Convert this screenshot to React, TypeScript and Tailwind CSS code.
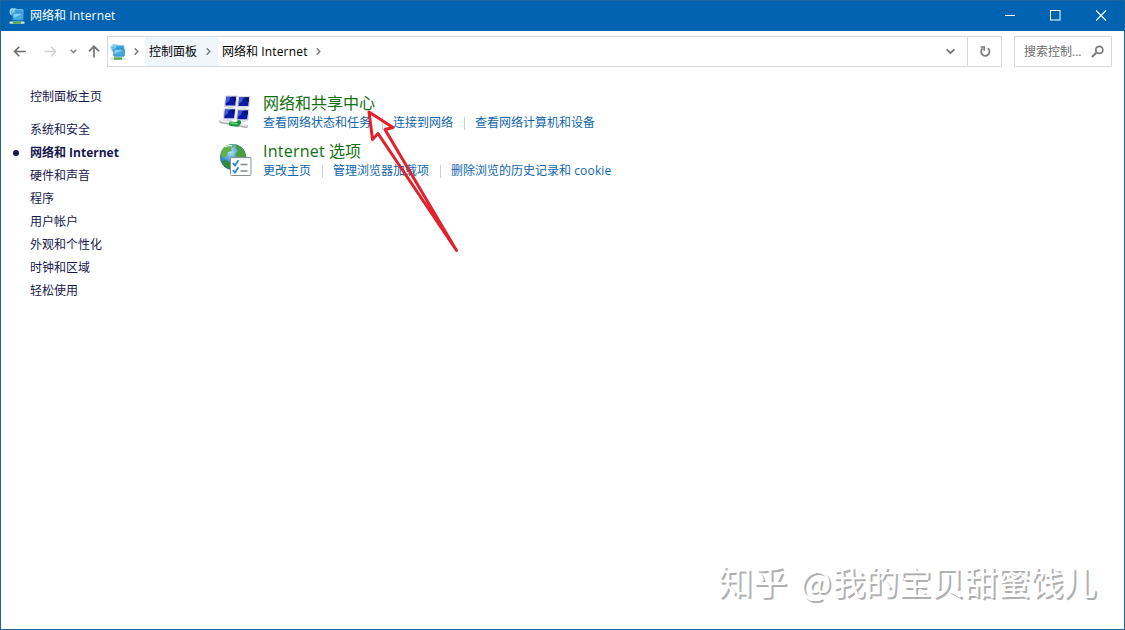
import { ChevronDown, ChevronRight } from 'lucide-react';
import type { ReactNode } from 'react';

interface Category {
  title: string;
  icon: ReactNode;
  tasks: string[];
}

const sidebarLinks = [
  '系统和安全',
  '网络和 Internet',
  '硬件和声音',
  '程序',
  '用户帐户',
  '外观和个性化',
  '时钟和区域',
  '轻松使用',
];

// Latin words get slightly wider tracking than the Chinese around them
function MixedText({ text }: { text: string }) {
  return (
    <>
      {text.split(/([A-Za-z]+)/).map((part, i) =>
        /^[A-Za-z]/.test(part) ? (
          <span key={i} className="tracking-[0.015em]">
            {part}
          </span>
        ) : (
          part
        )
      )}
    </>
  );
}

function NetworkIcon({ className }: { className?: string }) {
  return (
    <svg viewBox="0 0 16 18" width="16" height="18" className={className}>
      <circle cx="4.3" cy="4.8" r="3.8" fill="#a9d8ef" />
      <path d="M1 4.5C3 5.5 6 4 7 1.5M3 8.5C2 6 3 2.5 5 1" stroke="#5aa9d6" strokeWidth="0.9" fill="none" />
      <rect x="5.5" y="2.5" width="8.5" height="6.5" rx="0.6" fill="#3ba3dc" stroke="#7fcbee" strokeWidth="0.8" />
      <rect x="3.8" y="6" width="10.5" height="7.2" rx="0.6" fill="#45a9e2" stroke="#2582bd" strokeWidth="0.8" />
      <path d="M4.5 6.8h9L4.5 11z" fill="#83cdf0" />
      <rect x="0.5" y="14.5" width="15" height="2.3" rx="0.6" fill="#d3e2e2" />
      <rect x="4" y="14.2" width="8" height="2.6" rx="0.6" fill="#55ad4f" />
    </svg>
  );
}

function Monitor({ x, y }: { x: number; y: number }) {
  return (
    <g transform={`translate(${x} ${y})`}>
      <path d="M1.4 0.4H13L12 11H0.4z" fill="#e6e9ee" stroke="#b9bec8" strokeWidth="0.5" />
      <path d="M2.2 1.2H12.1L11.2 10H1.4z" fill="#0b1aa0" />
      <path d="M2.2 1.2H6.4L5 5.4L1.6 8z" fill="#4557c8" />
      <path d="M7.5 1.2H12.1L11.5 6.2L9.2 4.4z" fill="#071078" />
      <path d="M4 11.4H9.5L9 12.8H3.4z" fill="#d5d9df" />
    </g>
  );
}

function SharingCenterIcon() {
  return (
    <svg viewBox="0 0 34 34" width="34" height="34">
      <Monitor x={5} y={0.5} />
      <Monitor x={18} y={1} />
      <Monitor x={3.8} y={13.2} />
      <Monitor x={17} y={14.2} />
      <path d="M2 26.5L27 31.3" stroke="#a9aeb2" strokeWidth="3.6" strokeLinecap="round" />
      <path d="M2 25.8L27 30.6" stroke="#eceff0" strokeWidth="2" strokeLinecap="round" />
      <path d="M12 28.8L18 29.6L20 27.4" stroke="#13933a" strokeWidth="4.4" strokeLinecap="round" strokeLinejoin="round" fill="none" />
      <path d="M12 28L18 28.8" stroke="#54d472" strokeWidth="1.8" strokeLinecap="round" />
    </svg>
  );
}

function InternetOptionsIcon() {
  return (
    <svg viewBox="0 0 34 34" width="34" height="34">
      <defs>
        <radialGradient id="globe" cx="0.4" cy="0.3" r="0.75">
          <stop offset="0" stopColor="#b9e5fb" />
          <stop offset="0.5" stopColor="#3c8dcb" />
          <stop offset="1" stopColor="#133f8d" />
        </radialGradient>
      </defs>
      <circle cx="14" cy="14" r="13" fill="url(#globe)" />
      <path d="M3 7C6 2.5 10 1 13 1L15 3L12 5L13 8L9 9L8 13L4 15L1.5 12z" fill="#61b04b" />
      <path d="M17 1.5C22 3 25.5 6.5 26.5 11L26 15H18L16 11L19 8L17 5z" fill="#469e3d" />
      <path d="M2.5 18L7 17L11 20V26C7 25 4 22 2.5 18z" fill="#2f8a3e" />
      <path d="M6 4C8.5 2.5 11 2 13 3" stroke="#d9f4de" strokeWidth="1.4" fill="none" />
      <rect x="11.5" y="14.5" width="20.5" height="18" rx="1" fill="#fdfdfd" stroke="#8b9299" />
      <path d="M12.5 14.5H31.5" stroke="#8b9299" strokeWidth="1.4" strokeDasharray="1 1" />
      <path d="M14 20L16 22.5L19.5 17.3M14 27L16 29.5L19.5 24.3" stroke="#2284bf" strokeWidth="1.7" fill="none" />
      <path d="M21.5 21.5H28.5M21.5 28H28.5" stroke="#858b91" strokeWidth="1.3" />
    </svg>
  );
}

const categories: Category[] = [
  {
    title: '网络和共享中心',
    icon: <SharingCenterIcon />,
    tasks: ['查看网络状态和任务', '连接到网络', '查看网络计算机和设备'],
  },
  {
    title: 'Internet 选项',
    icon: <InternetOptionsIcon />,
    tasks: ['更改主页', '管理浏览器加载项', '删除浏览的历史记录和 cookie'],
  },
];

function TitleBar() {
  return (
    <header className="flex h-[31px] shrink-0 items-center bg-[#0063b1] pl-[9px] text-white">
      <NetworkIcon className="mr-[5px]" />
      <h1 className="flex-1">
        <MixedText text="网络和 Internet" />
      </h1>
      <button className="flex h-full w-[45px] items-center justify-center" aria-label="最小化">
        <svg width="11" height="11" viewBox="0 0 11 11">
          <path d="M0 5.5H10" stroke="white" />
        </svg>
      </button>
      <button className="flex h-full w-[45px] items-center justify-center" aria-label="最大化">
        <svg width="11" height="11" viewBox="0 0 11 11">
          <rect x="0.5" y="0.5" width="9.5" height="9.5" fill="none" stroke="white" />
        </svg>
      </button>
      <button className="flex h-full w-[47px] items-center justify-center" aria-label="关闭">
        <svg width="11" height="11" viewBox="0 0 11 11">
          <path d="M0 0.5L10 10.5M10 0.5L0 10.5" stroke="white" strokeWidth="1.1" />
        </svg>
      </button>
    </header>
  );
}

function AddressRow() {
  return (
    <nav className="flex h-[41px] shrink-0 items-center pr-[13px] pl-[13px]">
      <svg width="13" height="13" viewBox="0 0 13 13" fill="none" stroke="#6b6b6b" strokeWidth="1.6">
        <path d="M12.8 6.5H1.8M6.3 1.8L1.6 6.5L6.3 11.2" />
      </svg>
      <svg className="ml-[18px]" width="13" height="13" viewBox="0 0 13 13" fill="none" stroke="#cfcfcf" strokeWidth="1.4">
        <path d="M0.5 6.5H11.5M7 1.8L11.7 6.5L7 11.2" />
      </svg>
      <svg className="ml-[13px]" width="7" height="5" viewBox="0 0 7 5" fill="none" stroke="#858585" strokeWidth="1.5">
        <path d="M0.7 0.8L3.5 3.6L6.3 0.8" />
      </svg>
      <svg className="ml-[11px]" width="12" height="13" viewBox="0 0 12 13" fill="none" stroke="#757575" strokeWidth="1.7">
        <path d="M6 12.5V1.5M1 6.3L6 1.3L11 6.3" />
      </svg>

      <div className="ml-[7px] flex h-[31px] flex-1 items-center border border-[#d9d9d9]">
        <NetworkIcon className="ml-[2px]" />
        <ChevronRight className="ml-[5px] text-[#777]" size={11} strokeWidth={3.2} />
        <div className="ml-[3px] flex h-full items-center bg-[#eff7fd] pl-1">
          <span>控制面板</span>
          <ChevronRight className="mr-1 ml-[6px] text-[#777]" size={11} strokeWidth={3.2} />
        </div>
        <span className="ml-[4px]">
          <MixedText text="网络和 Internet" />
        </span>
        <ChevronRight className="ml-[5px] text-[#777]" size={11} strokeWidth={3.2} />
        <ChevronDown className="mr-2.5 ml-auto text-[#777]" size={13} strokeWidth={3.6} />
        <div className="flex h-full w-[34px] items-center justify-center border-l border-[#d9d9d9]">
          <svg width="12" height="13" viewBox="0 0 12 13" fill="none" stroke="#7a7a7a" strokeWidth="1.7">
            <path d="M8.8 3.2A4.2 4.2 0 1 1 3.6 3.4" />
            <path d="M1.6 2H5.2V5.8" />
          </svg>
        </div>
      </div>

      <div className="ml-3 flex h-[31px] w-[98px] items-center border border-[#d9d9d9] pl-[9px]">
        <span className="flex-1 whitespace-nowrap text-[#6d6d6d]">搜索控制...</span>
        <svg className="mr-[7px]" width="13" height="13" viewBox="0 0 13 13" fill="none" stroke="#777" strokeWidth="1.7">
          <circle cx="8.3" cy="4.9" r="3.5" />
          <path d="M5.6 7.4L1 12" strokeWidth="2" />
        </svg>
      </div>
    </nav>
  );
}

function Sidebar() {
  return (
    <aside className="w-[218px] shrink-0 pt-[13px] pl-[11px] text-[#17174f]">
      <a className="block h-[23px] pl-[18px] leading-[23px]">控制面板主页</a>
      <ul className="mt-2.5">
        {sidebarLinks.map((link) => {
          const active = link === '网络和 Internet';
          return (
            <li key={link} className="flex h-[23px] items-center">
              <span className={active ? 'ml-px size-[6px] rounded-full bg-[#17174f]' : 'ml-px size-[6px]'} />
              <a className={active ? 'ml-[11px] font-bold' : 'ml-[11px]'}>{link}</a>
            </li>
          );
        })}
      </ul>
    </aside>
  );
}

function CategoryItem({ category }: { category: Category }) {
  return (
    <section className="flex h-12">
      <div className="mt-px w-11">{category.icon}</div>
      <div>
        <h2 className="h-[18px] text-[16px] leading-[18px] text-[#0f700f]">
          <MixedText text={category.title} />
        </h2>
        <div className="mt-[2px] flex h-[18px] items-center text-[#0f66b0]">
          {category.tasks.map((task, i) => (
            <div key={task} className="flex items-center">
              {i > 0 && <span className="mr-2.5 ml-[11px] h-[13px] w-px bg-[#cfcfcf]" />}
              <a className="whitespace-nowrap">
                <MixedText text={task} />
              </a>
            </div>
          ))}
        </div>
      </div>
    </section>
  );
}

export default function App() {
  return (
    <div className="relative flex h-[630px] w-[1125px] flex-col overflow-hidden bg-white font-['Open_Sans','Noto_Sans_CJK_SC',sans-serif] text-[12px] leading-[18px] text-black">
      <TitleBar />
      <AddressRow />
      <div className="flex flex-1 pl-px">
        <Sidebar />
        <main className="pt-[22px]">
          {categories.map((category) => (
            <CategoryItem key={category.title} category={category} />
          ))}
        </main>
      </div>

      <div className="pointer-events-none absolute inset-0 border border-[#21649a]" />

      {/* hand-drawn pointer to the sharing center link */}
      <svg className="pointer-events-none absolute top-[100px] left-[355px]" width="115" height="160" viewBox="355 100 115 160">
        <path
          d="M456.5 250.5L378 133.5L372.5 139.5L369 112L393 127.5L385 129.5Z"
          fill="none"
          stroke="#e3212b"
          strokeWidth="3"
          strokeLinejoin="round"
        />
      </svg>

      <p className="pointer-events-none absolute top-[556px] left-[718px] font-['Noto_Sans_CJK_SC',sans-serif] text-[33px] leading-[48px] whitespace-nowrap text-white [text-shadow:2px_2px_0_#b0b0b0]">
        <span className="text-[34.5px]">知乎</span>
        <span className="mr-[1px] ml-[13px]">@</span>
        我的宝贝甜蜜饯儿
      </p>
    </div>
  );
}
